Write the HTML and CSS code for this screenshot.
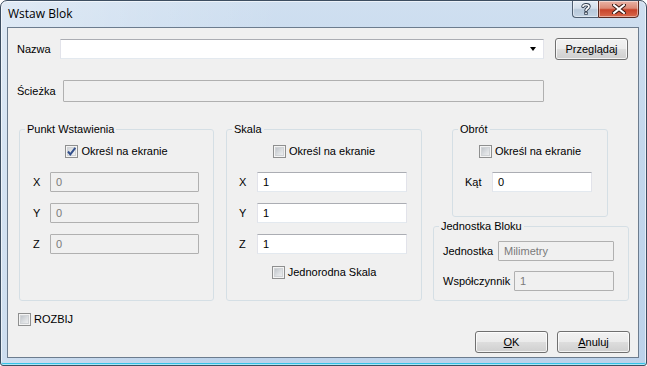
FILE: index.html
```html
<!DOCTYPE html>
<html lang="pl">
<head>
<meta charset="utf-8">
<title>Wstaw Blok</title>
<link rel="stylesheet" href="styles.css">
</head>
<body>
<div class="window">
  <div class="titlebar">
    <span class="title">Wstaw Blok</span>
    <div class="caption-buttons">
      <div class="cap cap-help">
        <svg width="10" height="12" viewBox="0 0 10 12">
          <path d="M2 3.5 C2 1.2 8 1.2 8 3.5 C8 5.5 5 5.5 5 7.5" fill="none" stroke="#2e3b4c" stroke-width="3.4" stroke-linecap="round"/>
          <rect x="3.3" y="8.8" width="3.4" height="3" fill="#2e3b4c"/>
          <path d="M2 3.5 C2 1.2 8 1.2 8 3.5 C8 5.5 5 5.5 5 7.5" fill="none" stroke="#ffffff" stroke-width="1.6" stroke-linecap="round"/>
          <rect x="4.2" y="9.6" width="1.6" height="1.5" fill="#ffffff"/>
        </svg>
      </div>
      <div class="cap cap-close">
        <svg width="14" height="10" viewBox="0 0 14 10">
          <path d="M2 1 L12 9 M12 1 L2 9" stroke="#3a1a14" stroke-width="4" stroke-linecap="square"/>
          <path d="M2 1 L12 9 M12 1 L2 9" stroke="#ffffff" stroke-width="2" stroke-linecap="square"/>
        </svg>
      </div>
    </div>
  </div>

  <div class="client">
    <div class="row row-name">
      <span class="lbl lbl-name">Nazwa</span>
      <div class="combo">
        <span class="combo-arrow"></span>
      </div>
      <button class="btn btn-browse">Przeglądaj</button>
    </div>

    <div class="row row-path">
      <span class="lbl lbl-path">Ścieżka</span>
      <div class="field field-disabled field-path"></div>
    </div>

    <div class="groups">
      <fieldset class="group group-insert">
        <legend>Punkt Wstawienia</legend>
        <div class="check-row first-check">
          <span class="cb cb-checked">
            <svg width="11" height="11" viewBox="0 0 11 11"><path d="M2 5.5 L4.3 8.3 L9.3 1.8" fill="none" stroke="#33508c" stroke-width="2"/></svg>
          </span>
          <span>Określ na ekranie</span>
        </div>
        <div class="field-row first-field">
          <span class="axis axis-insert">X</span>
          <div class="field field-disabled w149">0</div>
        </div>
        <div class="field-row">
          <span class="axis axis-insert">Y</span>
          <div class="field field-disabled w149">0</div>
        </div>
        <div class="field-row">
          <span class="axis axis-insert">Z</span>
          <div class="field field-disabled w149">0</div>
        </div>
      </fieldset>

      <fieldset class="group group-scale">
        <legend>Skala</legend>
        <div class="check-row first-check">
          <span class="cb"></span>
          <span>Określ na ekranie</span>
        </div>
        <div class="field-row first-field">
          <span class="axis axis-scale">X</span>
          <div class="field w150">1</div>
        </div>
        <div class="field-row">
          <span class="axis axis-scale">Y</span>
          <div class="field w150">1</div>
        </div>
        <div class="field-row">
          <span class="axis axis-scale">Z</span>
          <div class="field w150">1</div>
        </div>
        <div class="check-row uniform-check">
          <span class="cb"></span>
          <span>Jednorodna Skala</span>
        </div>
      </fieldset>

      <div class="right-col">
        <fieldset class="group group-rotation">
          <legend>Obrót</legend>
          <div class="check-row first-check">
            <span class="cb"></span>
            <span>Określ na ekranie</span>
          </div>
          <div class="field-row first-field">
            <span class="axis axis-angle">Kąt</span>
            <div class="field w100">0</div>
          </div>
        </fieldset>

        <fieldset class="group group-unit">
          <legend>Jednostka Bloku</legend>
          <div class="field-row unit-row">
            <span class="axis axis-unit">Jednostka</span>
            <div class="field field-disabled w116">Milimetry</div>
          </div>
          <div class="field-row factor-row">
            <span class="axis axis-factor">Współczynnik</span>
            <div class="field field-disabled w100">1</div>
          </div>
        </fieldset>
      </div>
    </div>

    <div class="check-row explode">
      <span class="cb"></span>
      <span>ROZBIJ</span>
    </div>

    <div class="actions">
      <button class="btn btn-action"><u>O</u>K</button>
      <button class="btn btn-action"><u>A</u>nuluj</button>
    </div>
  </div>
</div>
</body>
</html>
```

FILE: styles.css
```css
* { box-sizing: border-box; }

body {
  margin: 0;
  background: #ffffff;
  font-family: "Liberation Sans", Arial, sans-serif;
  font-size: 11px;
  color: #000;
}

.window {
  width: 647px;
  height: 366px;
  border: 1px solid #3d4e61;
  border-radius: 7px 7px 3px 3px;
  background:
    linear-gradient(100deg, rgba(255,255,255,0.35) 0%, rgba(255,255,255,0.15) 20%, rgba(255,255,255,0) 40%),
    linear-gradient(180deg, #cfdff0 0%, #c3d7ec 40%, #bcd2ea 100%);
  box-shadow: inset 0 0 0 1px rgba(255,255,255,0.6), inset 0 -2px 0 #35c3e8;
  display: flex;
  flex-direction: column;
  overflow: hidden;
}

.titlebar {
  height: 26px;
  display: flex;
  justify-content: space-between;
  align-items: flex-start;
  padding-left: 7px;
}

.title {
  font-family: "Open Sans", "Noto Sans", sans-serif;
  font-size: 12px;
  line-height: 16px;
  margin-top: 5px;
  color: #000;
}

.caption-buttons {
  display: flex;
  margin-right: 7px;
  margin-top: -1px;
}

.cap {
  height: 18px;
  border: 1px solid #4f5f72;
  display: flex;
  align-items: center;
  justify-content: center;
  box-shadow: inset 0 0 0 1px rgba(255,255,255,0.45);
}

.cap-help {
  width: 26px;
  border-right: none;
  border-radius: 0 0 0 4px;
  background: linear-gradient(180deg, #e4ecf5 0%, #d3dfeb 45%, #b7c8da 55%, #c4d4e4 100%);
}

.cap-close {
  width: 41px;
  border-radius: 0 0 4px 0;
  border-color: #5b2b22;
  background: linear-gradient(180deg, #eab3a6 0%, #dc8a76 45%, #c8432a 55%, #d8694c 100%);
}

.client {
  margin: 0 7px 7px 6px;
  height: 331px;
  border: 1px solid #6c7c8e;
  background: #f0f0f0;
  display: flex;
  flex-direction: column;
}

.row {
  display: flex;
  align-items: center;
  padding-left: 9px;
  height: 22px;
}

.row-name { margin-top: 10px; }
.row-path { margin-top: 20px; }

.lbl { flex: none; }
.lbl-name { width: 43px; }
.lbl-path { width: 46px; }

.combo {
  position: relative;
  width: 484px;
  height: 20px;
  background: #fff;
  border: 1px solid #e2e3ea;
  border-top-color: #abadb3;
  border-bottom-color: #e3e9ef;
}

.combo-arrow {
  position: absolute;
  right: 7px;
  top: 7px;
  width: 0;
  height: 0;
  border-left: 3.5px solid transparent;
  border-right: 3.5px solid transparent;
  border-top: 4px solid #000;
}

.btn {
  font-family: "Liberation Sans", Arial, sans-serif;
  font-size: 11px;
  color: #000;
  width: 73px;
  height: 22px;
  padding: 0;
  border: 1px solid #707070;
  border-radius: 3px;
  background: linear-gradient(180deg, #f2f2f2 0%, #ebebeb 48%, #dddddd 52%, #cfcfcf 100%);
  box-shadow: inset 0 0 0 1px rgba(255,255,255,0.75);
}

.btn-browse { margin-left: 11px; }

.field {
  height: 20px;
  background: #fff;
  border: 1px solid #e2e3ea;
  border-top-color: #abadb3;
  border-bottom-color: #e3e9ef;
  padding-left: 5px;
  line-height: 18px;
  color: #000;
}

.field-disabled {
  background: #f0f0f0;
  border: 1px solid #b0b0b0;
  color: #7a7a7a;
  border-radius: 1px;
}

.field-path {
  width: 481px;
  height: 22px;
}

.w149 { width: 149px; }
.w150 { width: 150px; }
.w100 { width: 100px; }
.w116 { width: 116px; }

.groups {
  display: flex;
  align-items: stretch;
  margin-top: 21px;
  padding-left: 11px;
}

.group {
  margin: 0;
  padding: 0;
  min-width: 0;
  border: 1px solid #d5dfe5;
  border-radius: 3px;
}

.group legend {
  margin-left: 5px;
  padding: 0 2px;
  line-height: 13px;
  font-size: 11px;
}

.group-insert { width: 195px; }
.group-scale { width: 196px; margin-left: 12px; }

.right-col {
  width: 196px;
  margin-left: 11px;
  display: flex;
  flex-direction: column;
}

.group-rotation {
  width: 156px;
  margin-left: 19px;
  padding-bottom: 24px;
}

.group-unit {
  width: 196px;
  margin-top: 3px;
  padding-bottom: 9px;
}

.check-row {
  display: flex;
  align-items: center;
  gap: 3px;
  height: 13px;
  line-height: 13px;
}

.first-check {
  justify-content: center;
  margin-top: 9px;
}

.uniform-check {
  justify-content: center;
  margin-top: 12px;
}

.cb {
  flex: none;
  width: 13px;
  height: 13px;
  border: 1px solid #8e8f8f;
  background: linear-gradient(135deg, #b4b9bf 0%, #dcdfe2 55%, #f6f6f6 100%);
  box-shadow: inset 0 0 0 1px #f4f4f4, inset 0 0 0 2px #d0d3d6;
  display: flex;
  align-items: center;
  justify-content: center;
}

.cb-checked {
  background: linear-gradient(135deg, #c8ccd2 0%, #e6e8ea 55%, #f8f8f8 100%);
}

.field-row {
  display: flex;
  align-items: center;
  height: 20px;
  margin-top: 11px;
}

.first-field { margin-top: 14px; }

.axis { flex: none; }
.axis-insert { width: 30px; padding-left: 13px; }
.axis-scale { width: 30px; padding-left: 12px; }
.axis-angle { width: 39px; padding-left: 12px; }
.axis-unit { width: 64px; padding-left: 9px; }
.axis-factor { width: 80px; padding-left: 9px; }

.unit-row { margin-top: 8px; }
.factor-row { margin-top: 10px; }

.explode {
  margin-top: 12px;
  padding-left: 10px;
}

.actions {
  display: flex;
  justify-content: flex-end;
  gap: 9px;
  padding-right: 8px;
  margin-top: 5px;
}
```
